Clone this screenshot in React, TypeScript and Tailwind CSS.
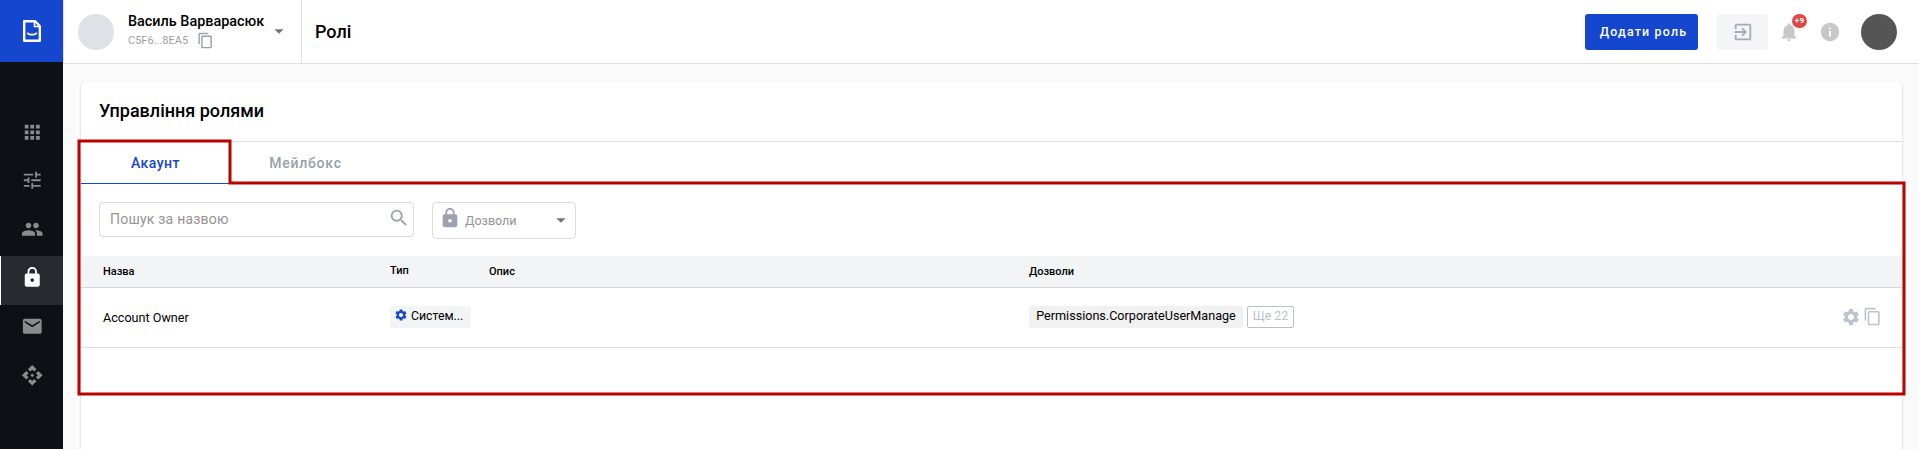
import React from "react";
import {
  MdApps, MdTune, MdPeople, MdLock, MdMail, MdApi, MdSearch, MdContentCopy,
  MdSettings, MdExitToApp, MdNotifications, MdInfo, MdArrowDropDown,
} from "react-icons/md";

const nav = [
  { id: "apps", Icon: MdApps, pad: "pb-[2px]" },
  { id: "tune", Icon: MdTune, pad: "pb-[4px]" },
  { id: "people", Icon: MdPeople, pad: "pb-[4px]" },
  { id: "roles", Icon: MdLock, pad: "pb-[6px]", active: true },
  { id: "mail", Icon: MdMail, pad: "pb-[6px]" },
  { id: "api", Icon: MdApi, pad: "pb-[6px]" },
];

function Logo() {
  return (
    <svg width="18" height="22" viewBox="0 0 18 22" fill="none" stroke="#fff">
      <path d="M1.2 1.2H12L16.8 6V20.8H1.2Z" strokeWidth="2.4" strokeLinejoin="round" />
      <path d="M11.5 1.5V6.5H16.5" strokeWidth="1.6" />
      <path d="M4.2 12.8C6.5 15.3 11.5 15.3 13.8 12.8" strokeWidth="1.8" />
    </svg>
  );
}

function Sidebar() {
  return (
    <aside className="flex w-[63px] shrink-0 flex-col bg-[#0d1014]">
      <div className="flex h-[62px] items-center justify-center bg-[#1446ce] pl-[1px]">
        <Logo />
      </div>
      <nav className="flex flex-col pt-[47px]">
        {nav.map(({ id, Icon, pad, active }) => (
          <a
            key={id}
            className={
              (active
                ? "flex h-[49px] items-center justify-center border-l border-white bg-[#272a2e] pl-[1px] text-white "
                : "flex h-[49px] items-center justify-center pl-[2px] text-[#8a8b8d] ") + pad
            }
          >
            <Icon size={22.5} />
          </a>
        ))}
      </nav>
    </aside>
  );
}

function Header() {
  return (
    <header className="flex h-16 shrink-0 items-start border-b border-l border-[#e0e0e0] bg-white">
      <div className="flex h-[63px] w-[238px] items-center border-r border-[#e0e0e0] pl-[14px]">
        <div className="mt-[1px] size-9 rounded-full bg-[#dee2e6]" />
        <div className="ml-[14px] w-[136px] whitespace-nowrap">
          <div className="mt-[-3px] text-[14.4px] leading-[20px] font-medium">Василь Варварасюк</div>
          <div className="flex h-[16px] items-center text-[11px] leading-[16px] text-[#98a2ac]">
            <span className="mt-[1px] w-[61px]">C5F6...8EA5</span>
            <MdContentCopy size={17} className="mt-[1px] ml-[8px]" />
          </div>
        </div>
        <MdArrowDropDown size={22} className="mb-[1px] ml-[4px] text-[#757575]" />
      </div>
      <h1 className="ml-[13px] text-[18px] leading-[63px] font-medium">Ролі</h1>
      <div className="ml-auto flex h-[63px] items-center pt-[1px] pr-[22px]">
        <button className="h-9 w-[113px] rounded-[3px] bg-[#1446ce] pl-[4px] text-[12.4px] font-medium tracking-[1.2px] whitespace-nowrap text-white">
          Додати роль
        </button>
        <button className="ml-[19px] flex h-9 w-[51px] items-center justify-center rounded-[3px] bg-[#f3f5f7] text-[#a3adb8]">
          <MdExitToApp size={22} />
        </button>
        <div className="relative ml-[10px] text-[#c8c8c8]">
          <MdNotifications size={22} />
          <span className="absolute -top-[7px] left-[14px] flex h-[14px] w-[15px] items-center justify-center rounded-full bg-[#e04848] text-[8px] font-bold tracking-[0.4px] text-white">
            +9
          </span>
        </div>
        <MdInfo size={22} className="ml-[19px] text-[#c8c8c8]" />
        <div className="ml-[20px] size-9 rounded-full bg-[#555555]" />
      </div>
    </header>
  );
}

function Filters() {
  return (
    <div className="flex h-[72px] items-start pt-[18px] pl-[18px]">
      <div className="flex h-[35px] w-[315px] items-center rounded-[4px] border border-[#dcdcdc] pr-[3px] pl-[10px] text-[14px] tracking-[0.22px] text-[#949494]">
        Пошук за назвою
        <MdSearch size={22} className="mb-[3px] ml-auto text-[#9ca3af]" />
      </div>
      <div className="ml-[18px] flex h-[37px] w-[144px] items-center rounded-[4px] border border-[#dcdcdc] pr-[3px] pl-[6px] text-[12.5px] text-[#949494]">
        <MdLock size={22} className="mb-[5px] text-[#9ca3af]" />
        <span className="mt-[1px] ml-[4px]">Дозволи</span>
        <MdArrowDropDown size={22} className="mb-[2px] ml-auto text-[#757575]" />
      </div>
    </div>
  );
}

const cols = "grid grid-cols-[287px_99px_540px_1fr] pl-[22px] items-center";

function Table() {
  return (
    <div>
      <div className={cols + " h-8 border-b border-[#d5d7da] bg-[#f3f4f6] text-[11px] font-medium"}>
        <span className="mt-[1px]">Назва</span>
        <span className="mb-[1px]">Тип</span>
        <span className="mt-[1px]">Опис</span>
        <span className="mt-[1px]">Дозволи</span>
      </div>
      <div className={cols + " h-[60px] border-b border-[#dedede] text-[12.6px]"}>
        <span className="mt-[1px]">Account Owner</span>
        <span className="mb-[2px] flex h-[22px] w-[81px] items-center rounded-[2px] bg-[#f3f4f6] pl-[4px] text-[12.3px]">
          <MdSettings size={14} className="mr-[3px] mb-[3px] text-[#1446ce]" />
          Систем...
        </span>
        <span />
        <div className="mb-[2px] flex items-center">
          <span className="flex h-[22px] w-[214px] items-center justify-center rounded-[2px] bg-[#f1f1f1]">
            Permissions.CorporateUserManage
          </span>
          <span className="ml-[4px] flex h-[22px] w-[47px] items-center justify-center rounded-[2px] border border-[#b9c0c9] text-[12.3px] text-[#bcc2ca]">
            Ще 22
          </span>
          <MdSettings size={20} className="ml-auto text-[#bcc3cc]" />
          <MdContentCopy size={19} className="mr-[20px] ml-[2px] text-[#bcc3cc]" />
        </div>
      </div>
    </div>
  );
}

export default function App() {
  return (
    <div className="relative flex h-[449px] w-[1919px] overflow-hidden bg-[#fafafa] font-[Roboto,sans-serif] text-black">
      <Sidebar />
      <div className="flex min-w-0 flex-1 flex-col">
        <Header />
        <main className="min-h-0 flex-1 pt-[18px] pr-[17px] pl-[18px]">
          <section className="h-[400px] rounded-[4px] bg-white shadow-[0_1px_2px_rgba(0,0,0,0.25)]">
            <h2 className="h-[60px] border-b border-[#dedede] pl-[18px] text-[18px] leading-[58px] font-medium">
              Управління ролями
            </h2>
            <div className="flex h-[42px] text-[14px] leading-[42px] font-medium">
              <div className="w-[149px] border-b border-[#1446ce] text-center tracking-[0.5px] text-[#1446ce]">Акаунт</div>
              <div className="w-[151px] text-center tracking-[0.75px] text-[#98a0a8]">Мейлбокс</div>
            </div>
            <Filters />
            <Table />
          </section>
        </main>
      </div>
      <svg className="pointer-events-none absolute top-0 left-0" width="1919" height="449" fill="none">
        <path d="M79 141H230V183H1904V394H79Z" stroke="#bb0000" strokeWidth="3" />
      </svg>
    </div>
  );
}
